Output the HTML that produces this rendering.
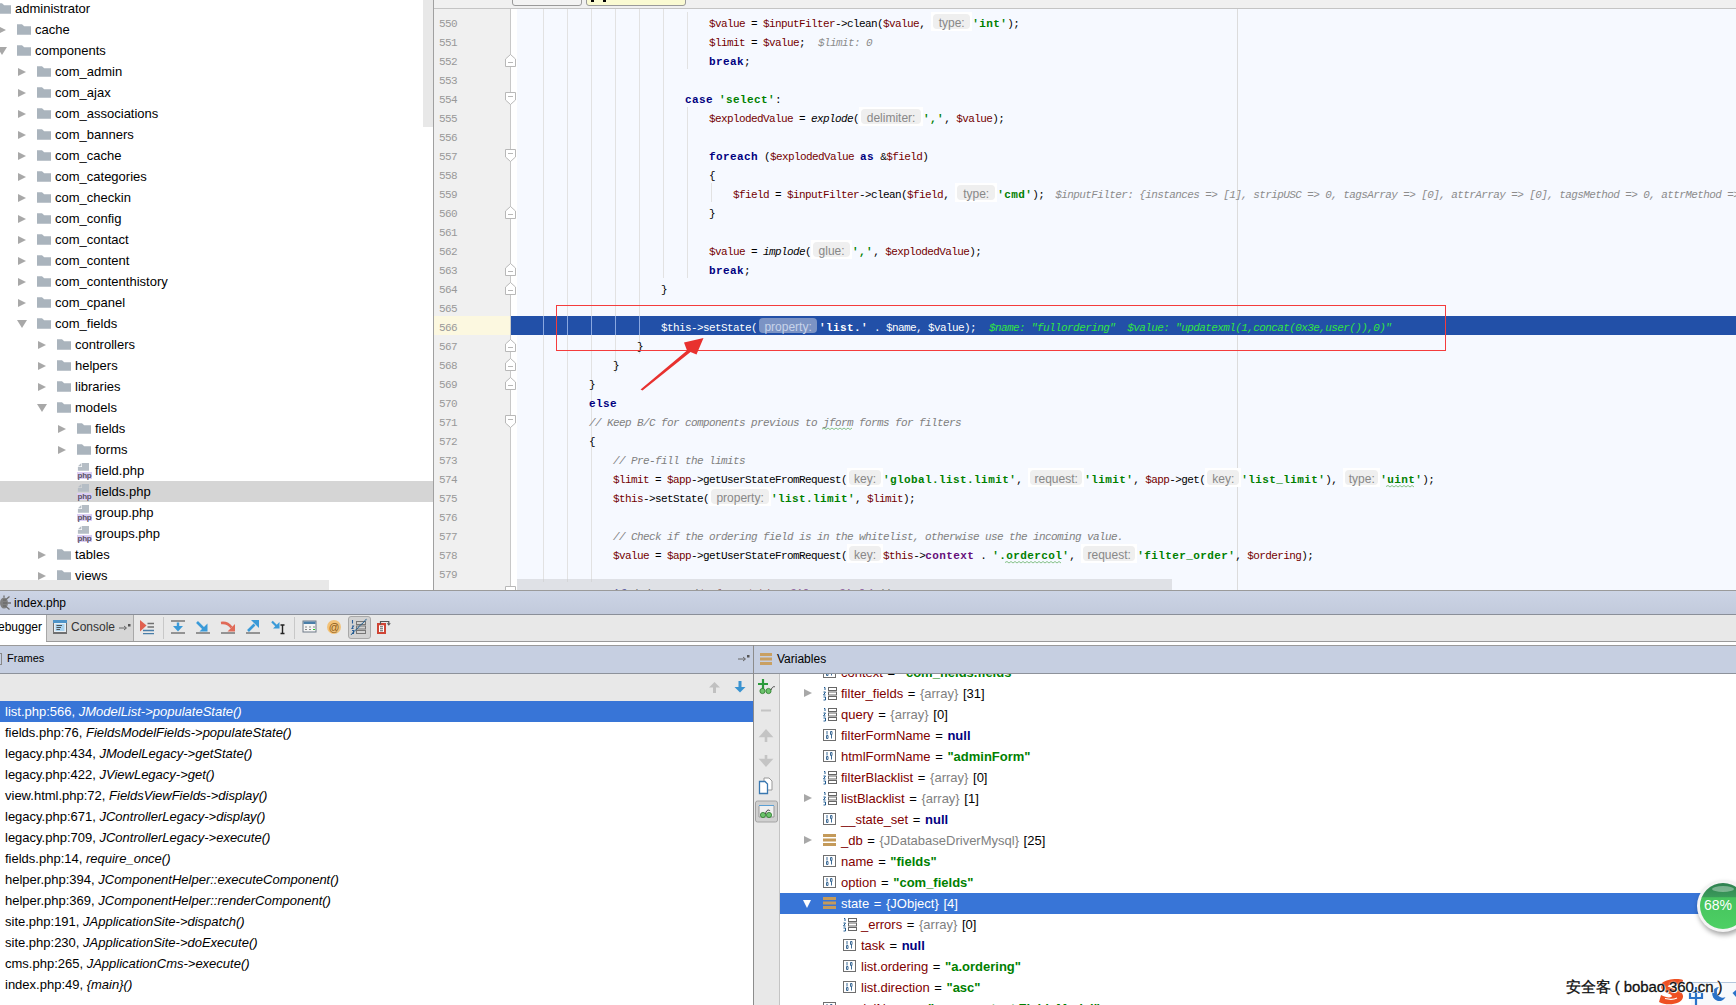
<!DOCTYPE html><html><head><meta charset="utf-8"><style>
*{margin:0;padding:0;box-sizing:border-box}
html,body{width:1736px;height:1005px;overflow:hidden;background:#fff;position:relative;font-family:"Liberation Sans",sans-serif}
.a{position:absolute}
.t{position:absolute;font-size:13px;line-height:21px;white-space:pre;color:#000}
.ln{position:absolute;font-family:"Liberation Mono",monospace;font-size:11px;letter-spacing:-0.6px;color:#999;line-height:19px;white-space:pre}
.cl{position:absolute;left:517px;font-family:"Liberation Mono",monospace;font-size:11px;line-height:19px;white-space:pre;color:#000;height:19px}
.cl span{letter-spacing:-0.6px}
.cl .b{font-weight:bold;letter-spacing:0.4px}
.v{color:#740000}
.cl .k{color:#000080;font-weight:bold;letter-spacing:0.4px}
.cl .s{color:#008000;font-weight:bold;letter-spacing:0.4px}
.c{color:#808080;font-style:italic}
.f{font-style:italic}
.cl .p{color:#660e7a;font-weight:bold;letter-spacing:0.4px}
.dbg{color:#8c8c8c;font-style:italic}
.cl .hb{letter-spacing:0}
.hb{display:inline-block;position:relative;top:-2.6px;height:19px;vertical-align:top;background:#fff}
.hb i{position:absolute;left:2px;right:2px;top:2px;bottom:2px;background:#efefef;border-radius:4px}
.hb b{position:absolute;left:0;right:0;top:1.5px;text-align:center;font-family:"Liberation Sans",sans-serif;font-weight:normal;font-size:12px;line-height:19px;color:#888;letter-spacing:0}
</style></head><body>
<div class="a" style="left:0;top:0;width:433px;height:590px;background:#fff;overflow:hidden">
<svg class="a" style="left:-3px;top:3px" width="14" height="11" viewBox="0 0 14 11"><path d="M0 0.2H5L7.2 2.2H14V10.8H0Z" fill="#aab4bd"/></svg>
<div class="t" style="left:15px;top:-2px">administrator</div>
<div class="a" style="left:-2px;top:26px;width:0;height:0;border-top:4.5px solid transparent;border-bottom:4.5px solid transparent;border-left:8px solid #a8a8a8"></div>
<svg class="a" style="left:17px;top:24px" width="14" height="11" viewBox="0 0 14 11"><path d="M0 0.2H5L7.2 2.2H14V10.8H0Z" fill="#aab4bd"/></svg>
<div class="t" style="left:35px;top:19px">cache</div>
<div class="a" style="left:-3px;top:47px;width:0;height:0;border-left:5px solid transparent;border-right:5px solid transparent;border-top:8px solid #a8a8a8"></div>
<svg class="a" style="left:17px;top:45px" width="14" height="11" viewBox="0 0 14 11"><path d="M0 0.2H5L7.2 2.2H14V10.8H0Z" fill="#aab4bd"/></svg>
<div class="t" style="left:35px;top:40px">components</div>
<div class="a" style="left:18px;top:68px;width:0;height:0;border-top:4.5px solid transparent;border-bottom:4.5px solid transparent;border-left:8px solid #a8a8a8"></div>
<svg class="a" style="left:37px;top:66px" width="14" height="11" viewBox="0 0 14 11"><path d="M0 0.2H5L7.2 2.2H14V10.8H0Z" fill="#aab4bd"/></svg>
<div class="t" style="left:55px;top:61px">com_admin</div>
<div class="a" style="left:18px;top:89px;width:0;height:0;border-top:4.5px solid transparent;border-bottom:4.5px solid transparent;border-left:8px solid #a8a8a8"></div>
<svg class="a" style="left:37px;top:87px" width="14" height="11" viewBox="0 0 14 11"><path d="M0 0.2H5L7.2 2.2H14V10.8H0Z" fill="#aab4bd"/></svg>
<div class="t" style="left:55px;top:82px">com_ajax</div>
<div class="a" style="left:18px;top:110px;width:0;height:0;border-top:4.5px solid transparent;border-bottom:4.5px solid transparent;border-left:8px solid #a8a8a8"></div>
<svg class="a" style="left:37px;top:108px" width="14" height="11" viewBox="0 0 14 11"><path d="M0 0.2H5L7.2 2.2H14V10.8H0Z" fill="#aab4bd"/></svg>
<div class="t" style="left:55px;top:103px">com_associations</div>
<div class="a" style="left:18px;top:131px;width:0;height:0;border-top:4.5px solid transparent;border-bottom:4.5px solid transparent;border-left:8px solid #a8a8a8"></div>
<svg class="a" style="left:37px;top:129px" width="14" height="11" viewBox="0 0 14 11"><path d="M0 0.2H5L7.2 2.2H14V10.8H0Z" fill="#aab4bd"/></svg>
<div class="t" style="left:55px;top:124px">com_banners</div>
<div class="a" style="left:18px;top:152px;width:0;height:0;border-top:4.5px solid transparent;border-bottom:4.5px solid transparent;border-left:8px solid #a8a8a8"></div>
<svg class="a" style="left:37px;top:150px" width="14" height="11" viewBox="0 0 14 11"><path d="M0 0.2H5L7.2 2.2H14V10.8H0Z" fill="#aab4bd"/></svg>
<div class="t" style="left:55px;top:145px">com_cache</div>
<div class="a" style="left:18px;top:173px;width:0;height:0;border-top:4.5px solid transparent;border-bottom:4.5px solid transparent;border-left:8px solid #a8a8a8"></div>
<svg class="a" style="left:37px;top:171px" width="14" height="11" viewBox="0 0 14 11"><path d="M0 0.2H5L7.2 2.2H14V10.8H0Z" fill="#aab4bd"/></svg>
<div class="t" style="left:55px;top:166px">com_categories</div>
<div class="a" style="left:18px;top:194px;width:0;height:0;border-top:4.5px solid transparent;border-bottom:4.5px solid transparent;border-left:8px solid #a8a8a8"></div>
<svg class="a" style="left:37px;top:192px" width="14" height="11" viewBox="0 0 14 11"><path d="M0 0.2H5L7.2 2.2H14V10.8H0Z" fill="#aab4bd"/></svg>
<div class="t" style="left:55px;top:187px">com_checkin</div>
<div class="a" style="left:18px;top:215px;width:0;height:0;border-top:4.5px solid transparent;border-bottom:4.5px solid transparent;border-left:8px solid #a8a8a8"></div>
<svg class="a" style="left:37px;top:213px" width="14" height="11" viewBox="0 0 14 11"><path d="M0 0.2H5L7.2 2.2H14V10.8H0Z" fill="#aab4bd"/></svg>
<div class="t" style="left:55px;top:208px">com_config</div>
<div class="a" style="left:18px;top:236px;width:0;height:0;border-top:4.5px solid transparent;border-bottom:4.5px solid transparent;border-left:8px solid #a8a8a8"></div>
<svg class="a" style="left:37px;top:234px" width="14" height="11" viewBox="0 0 14 11"><path d="M0 0.2H5L7.2 2.2H14V10.8H0Z" fill="#aab4bd"/></svg>
<div class="t" style="left:55px;top:229px">com_contact</div>
<div class="a" style="left:18px;top:257px;width:0;height:0;border-top:4.5px solid transparent;border-bottom:4.5px solid transparent;border-left:8px solid #a8a8a8"></div>
<svg class="a" style="left:37px;top:255px" width="14" height="11" viewBox="0 0 14 11"><path d="M0 0.2H5L7.2 2.2H14V10.8H0Z" fill="#aab4bd"/></svg>
<div class="t" style="left:55px;top:250px">com_content</div>
<div class="a" style="left:18px;top:278px;width:0;height:0;border-top:4.5px solid transparent;border-bottom:4.5px solid transparent;border-left:8px solid #a8a8a8"></div>
<svg class="a" style="left:37px;top:276px" width="14" height="11" viewBox="0 0 14 11"><path d="M0 0.2H5L7.2 2.2H14V10.8H0Z" fill="#aab4bd"/></svg>
<div class="t" style="left:55px;top:271px">com_contenthistory</div>
<div class="a" style="left:18px;top:299px;width:0;height:0;border-top:4.5px solid transparent;border-bottom:4.5px solid transparent;border-left:8px solid #a8a8a8"></div>
<svg class="a" style="left:37px;top:297px" width="14" height="11" viewBox="0 0 14 11"><path d="M0 0.2H5L7.2 2.2H14V10.8H0Z" fill="#aab4bd"/></svg>
<div class="t" style="left:55px;top:292px">com_cpanel</div>
<div class="a" style="left:17px;top:320px;width:0;height:0;border-left:5px solid transparent;border-right:5px solid transparent;border-top:8px solid #a8a8a8"></div>
<svg class="a" style="left:37px;top:318px" width="14" height="11" viewBox="0 0 14 11"><path d="M0 0.2H5L7.2 2.2H14V10.8H0Z" fill="#aab4bd"/></svg>
<div class="t" style="left:55px;top:313px">com_fields</div>
<div class="a" style="left:38px;top:341px;width:0;height:0;border-top:4.5px solid transparent;border-bottom:4.5px solid transparent;border-left:8px solid #a8a8a8"></div>
<svg class="a" style="left:57px;top:339px" width="14" height="11" viewBox="0 0 14 11"><path d="M0 0.2H5L7.2 2.2H14V10.8H0Z" fill="#aab4bd"/></svg>
<div class="t" style="left:75px;top:334px">controllers</div>
<div class="a" style="left:38px;top:362px;width:0;height:0;border-top:4.5px solid transparent;border-bottom:4.5px solid transparent;border-left:8px solid #a8a8a8"></div>
<svg class="a" style="left:57px;top:360px" width="14" height="11" viewBox="0 0 14 11"><path d="M0 0.2H5L7.2 2.2H14V10.8H0Z" fill="#aab4bd"/></svg>
<div class="t" style="left:75px;top:355px">helpers</div>
<div class="a" style="left:38px;top:383px;width:0;height:0;border-top:4.5px solid transparent;border-bottom:4.5px solid transparent;border-left:8px solid #a8a8a8"></div>
<svg class="a" style="left:57px;top:381px" width="14" height="11" viewBox="0 0 14 11"><path d="M0 0.2H5L7.2 2.2H14V10.8H0Z" fill="#aab4bd"/></svg>
<div class="t" style="left:75px;top:376px">libraries</div>
<div class="a" style="left:37px;top:404px;width:0;height:0;border-left:5px solid transparent;border-right:5px solid transparent;border-top:8px solid #a8a8a8"></div>
<svg class="a" style="left:57px;top:402px" width="14" height="11" viewBox="0 0 14 11"><path d="M0 0.2H5L7.2 2.2H14V10.8H0Z" fill="#aab4bd"/></svg>
<div class="t" style="left:75px;top:397px">models</div>
<div class="a" style="left:58px;top:425px;width:0;height:0;border-top:4.5px solid transparent;border-bottom:4.5px solid transparent;border-left:8px solid #a8a8a8"></div>
<svg class="a" style="left:77px;top:423px" width="14" height="11" viewBox="0 0 14 11"><path d="M0 0.2H5L7.2 2.2H14V10.8H0Z" fill="#aab4bd"/></svg>
<div class="t" style="left:95px;top:418px">fields</div>
<div class="a" style="left:58px;top:446px;width:0;height:0;border-top:4.5px solid transparent;border-bottom:4.5px solid transparent;border-left:8px solid #a8a8a8"></div>
<svg class="a" style="left:77px;top:444px" width="14" height="11" viewBox="0 0 14 11"><path d="M0 0.2H5L7.2 2.2H14V10.8H0Z" fill="#aab4bd"/></svg>
<div class="t" style="left:95px;top:439px">forms</div>
<svg class="a" style="left:77px;top:463px" width="16" height="17" viewBox="0 0 16 17"><path d="M5 0H12V7.7H0.9V4H5Z" fill="#b5bdc5"/><path d="M0.9 3.3L4.4 0V3.3Z" fill="#b5bdc5"/><rect x="0" y="9" width="15" height="7" fill="#dccff5"/><text x="7.5" y="15.3" font-size="8" font-weight="bold" text-anchor="middle" fill="#5a5266" font-family="Liberation Sans" letter-spacing="-0.2">php</text></svg>
<div class="t" style="left:95px;top:460px">field.php</div>
<div class="a" style="left:0;top:481px;width:433px;height:21px;background:#d5d5d5"></div>
<svg class="a" style="left:77px;top:484px" width="16" height="17" viewBox="0 0 16 17"><path d="M5 0H12V7.7H0.9V4H5Z" fill="#b5bdc5"/><path d="M0.9 3.3L4.4 0V3.3Z" fill="#b5bdc5"/><rect x="0" y="9" width="15" height="7" fill="#dccff5"/><text x="7.5" y="15.3" font-size="8" font-weight="bold" text-anchor="middle" fill="#5a5266" font-family="Liberation Sans" letter-spacing="-0.2">php</text></svg>
<div class="t" style="left:95px;top:481px">fields.php</div>
<svg class="a" style="left:77px;top:505px" width="16" height="17" viewBox="0 0 16 17"><path d="M5 0H12V7.7H0.9V4H5Z" fill="#b5bdc5"/><path d="M0.9 3.3L4.4 0V3.3Z" fill="#b5bdc5"/><rect x="0" y="9" width="15" height="7" fill="#dccff5"/><text x="7.5" y="15.3" font-size="8" font-weight="bold" text-anchor="middle" fill="#5a5266" font-family="Liberation Sans" letter-spacing="-0.2">php</text></svg>
<div class="t" style="left:95px;top:502px">group.php</div>
<svg class="a" style="left:77px;top:526px" width="16" height="17" viewBox="0 0 16 17"><path d="M5 0H12V7.7H0.9V4H5Z" fill="#b5bdc5"/><path d="M0.9 3.3L4.4 0V3.3Z" fill="#b5bdc5"/><rect x="0" y="9" width="15" height="7" fill="#dccff5"/><text x="7.5" y="15.3" font-size="8" font-weight="bold" text-anchor="middle" fill="#5a5266" font-family="Liberation Sans" letter-spacing="-0.2">php</text></svg>
<div class="t" style="left:95px;top:523px">groups.php</div>
<div class="a" style="left:38px;top:551px;width:0;height:0;border-top:4.5px solid transparent;border-bottom:4.5px solid transparent;border-left:8px solid #a8a8a8"></div>
<svg class="a" style="left:57px;top:549px" width="14" height="11" viewBox="0 0 14 11"><path d="M0 0.2H5L7.2 2.2H14V10.8H0Z" fill="#aab4bd"/></svg>
<div class="t" style="left:75px;top:544px">tables</div>
<div class="a" style="left:38px;top:572px;width:0;height:0;border-top:4.5px solid transparent;border-bottom:4.5px solid transparent;border-left:8px solid #a8a8a8"></div>
<svg class="a" style="left:57px;top:570px" width="14" height="11" viewBox="0 0 14 11"><path d="M0 0.2H5L7.2 2.2H14V10.8H0Z" fill="#aab4bd"/></svg>
<div class="t" style="left:75px;top:565px">views</div>
<svg class="a" style="left:57px;top:591px" width="14" height="11" viewBox="0 0 14 11"><path d="M0 0.2H5L7.2 2.2H14V10.8H0Z" fill="#aab4bd"/></svg>
<div class="a" style="left:0;top:580px;width:329px;height:10px;background:#e8e8e8"></div>
</div>
<div class="a" style="left:423px;top:0;width:10px;height:127px;background:#e8e8e8"></div>
<div class="a" style="left:433px;top:0;width:1px;height:590px;background:#a0a0a0"></div>
<div class="a" style="left:434px;top:0;width:1302px;height:590px;background:#f6f9ff;overflow:hidden">
</div>
<div class="a" style="left:434px;top:0;width:1302px;height:8px;background:#f0f0f0"></div>
<div class="a" style="left:434px;top:8px;width:1302px;height:1px;background:#c4c4c4"></div>
<div class="a" style="left:512px;top:-4px;width:70px;height:10px;background:#f3f3f3;border:1px solid #9a9a9a;border-radius:0 0 3px 3px"></div>
<div class="a" style="left:586px;top:-4px;width:100px;height:10px;background:#fafad2;border:1px solid #9a9a9a;border-radius:0 0 3px 3px"></div>
<div class="a" style="left:591px;top:0;width:3px;height:2px;background:#000"></div>
<div class="a" style="left:603px;top:0;width:3px;height:2px;background:#000"></div>
<div class="a" style="left:434px;top:9px;width:76px;height:581px;background:#f0f0f0"></div>
<div class="a" style="left:510px;top:9px;width:7px;height:581px;background:#fff"></div>
<div class="a" style="left:510px;top:9px;width:1px;height:581px;background:#c8c8c8"></div>
<div class="a" style="left:1237px;top:9px;width:1px;height:581px;background:#dcdcdc"></div>
<div class="a" style="left:543px;top:9px;width:1px;height:573px;background:#e2e2e2"></div>
<div class="a" style="left:567px;top:9px;width:1px;height:573px;background:#e2e2e2"></div>
<div class="a" style="left:591px;top:9px;width:1px;height:573px;background:#e2e2e2"></div>
<div class="a" style="left:615px;top:9px;width:1px;height:364px;background:#e2e2e2"></div>
<div class="a" style="left:639px;top:9px;width:1px;height:345px;background:#e2e2e2"></div>
<div class="a" style="left:663px;top:9px;width:1px;height:269px;background:#e2e2e2"></div>
<div class="a" style="left:687px;top:12px;width:1px;height:57px;background:#e2e2e2"></div>
<div class="a" style="left:687px;top:107px;width:1px;height:171px;background:#e2e2e2"></div>
<div class="a" style="left:711px;top:183px;width:1px;height:19px;background:#e2e2e2"></div>
<div class="a" style="left:511px;top:316px;width:1225px;height:19px;background:#2250a8"></div>
<div class="a" style="left:434px;top:316px;width:76px;height:19px;background:#fcf8e0"></div>
<div class="a" style="left:543px;top:316px;width:1px;height:19px;background:#8aa8e0"></div>
<div class="a" style="left:567px;top:316px;width:1px;height:19px;background:#8aa8e0"></div>
<div class="a" style="left:591px;top:316px;width:1px;height:19px;background:#8aa8e0"></div>
<div class="a" style="left:615px;top:316px;width:1px;height:19px;background:#8aa8e0"></div>
<div class="a" style="left:639px;top:316px;width:1px;height:19px;background:#8aa8e0"></div>
<div class="ln" style="left:439px;top:14.6px">550</div>
<div class="ln" style="left:439px;top:33.6px">551</div>
<div class="ln" style="left:439px;top:52.6px">552</div>
<div class="ln" style="left:439px;top:71.6px">553</div>
<div class="ln" style="left:439px;top:90.6px">554</div>
<div class="ln" style="left:439px;top:109.6px">555</div>
<div class="ln" style="left:439px;top:128.6px">556</div>
<div class="ln" style="left:439px;top:147.6px">557</div>
<div class="ln" style="left:439px;top:166.6px">558</div>
<div class="ln" style="left:439px;top:185.6px">559</div>
<div class="ln" style="left:439px;top:204.6px">560</div>
<div class="ln" style="left:439px;top:223.6px">561</div>
<div class="ln" style="left:439px;top:242.6px">562</div>
<div class="ln" style="left:439px;top:261.6px">563</div>
<div class="ln" style="left:439px;top:280.6px">564</div>
<div class="ln" style="left:439px;top:299.6px">565</div>
<div class="ln" style="left:439px;top:318.6px">566</div>
<div class="ln" style="left:439px;top:337.6px">567</div>
<div class="ln" style="left:439px;top:356.6px">568</div>
<div class="ln" style="left:439px;top:375.6px">569</div>
<div class="ln" style="left:439px;top:394.6px">570</div>
<div class="ln" style="left:439px;top:413.6px">571</div>
<div class="ln" style="left:439px;top:432.6px">572</div>
<div class="ln" style="left:439px;top:451.6px">573</div>
<div class="ln" style="left:439px;top:470.6px">574</div>
<div class="ln" style="left:439px;top:489.6px">575</div>
<div class="ln" style="left:439px;top:508.6px">576</div>
<div class="ln" style="left:439px;top:527.6px">577</div>
<div class="ln" style="left:439px;top:546.6px">578</div>
<div class="ln" style="left:439px;top:565.6px">579</div>
<div class="ln" style="left:439px;top:584.6px">580</div>
<div class="a" style="left:505px;top:53px;width:11px;height:13px"><svg width="11" height="13" viewBox="0 0 11 13"><path d="M0.5 12.5V5L5.5 0.5L10.5 5V12.5Z" fill="#fff" stroke="#b8b8b8"/><path d="M3 8.5H8" stroke="#b8b8b8"/></svg></div>
<div class="a" style="left:505px;top:205px;width:11px;height:13px"><svg width="11" height="13" viewBox="0 0 11 13"><path d="M0.5 12.5V5L5.5 0.5L10.5 5V12.5Z" fill="#fff" stroke="#b8b8b8"/><path d="M3 8.5H8" stroke="#b8b8b8"/></svg></div>
<div class="a" style="left:505px;top:262px;width:11px;height:13px"><svg width="11" height="13" viewBox="0 0 11 13"><path d="M0.5 12.5V5L5.5 0.5L10.5 5V12.5Z" fill="#fff" stroke="#b8b8b8"/><path d="M3 8.5H8" stroke="#b8b8b8"/></svg></div>
<div class="a" style="left:505px;top:281px;width:11px;height:13px"><svg width="11" height="13" viewBox="0 0 11 13"><path d="M0.5 12.5V5L5.5 0.5L10.5 5V12.5Z" fill="#fff" stroke="#b8b8b8"/><path d="M3 8.5H8" stroke="#b8b8b8"/></svg></div>
<div class="a" style="left:505px;top:338px;width:11px;height:13px"><svg width="11" height="13" viewBox="0 0 11 13"><path d="M0.5 12.5V5L5.5 0.5L10.5 5V12.5Z" fill="#fff" stroke="#b8b8b8"/><path d="M3 8.5H8" stroke="#b8b8b8"/></svg></div>
<div class="a" style="left:505px;top:357px;width:11px;height:13px"><svg width="11" height="13" viewBox="0 0 11 13"><path d="M0.5 12.5V5L5.5 0.5L10.5 5V12.5Z" fill="#fff" stroke="#b8b8b8"/><path d="M3 8.5H8" stroke="#b8b8b8"/></svg></div>
<div class="a" style="left:505px;top:376px;width:11px;height:13px"><svg width="11" height="13" viewBox="0 0 11 13"><path d="M0.5 12.5V5L5.5 0.5L10.5 5V12.5Z" fill="#fff" stroke="#b8b8b8"/><path d="M3 8.5H8" stroke="#b8b8b8"/></svg></div>
<div class="a" style="left:505px;top:91px;width:11px;height:13px"><svg width="11" height="13" viewBox="0 0 11 13"><path d="M0.5 0.5V8L5.5 12.5L10.5 8V0.5Z" fill="#fff" stroke="#b8b8b8"/><path d="M3 4.5H8" stroke="#b8b8b8"/></svg></div>
<div class="a" style="left:505px;top:148px;width:11px;height:13px"><svg width="11" height="13" viewBox="0 0 11 13"><path d="M0.5 0.5V8L5.5 12.5L10.5 8V0.5Z" fill="#fff" stroke="#b8b8b8"/><path d="M3 4.5H8" stroke="#b8b8b8"/></svg></div>
<div class="a" style="left:505px;top:414px;width:11px;height:13px"><svg width="11" height="13" viewBox="0 0 11 13"><path d="M0.5 0.5V8L5.5 12.5L10.5 8V0.5Z" fill="#fff" stroke="#b8b8b8"/><path d="M3 4.5H8" stroke="#b8b8b8"/></svg></div>
<div class="a" style="left:505px;top:585px;width:11px;height:13px"><svg width="11" height="13" viewBox="0 0 11 13"><path d="M0.5 0.5V8L5.5 12.5L10.5 8V0.5Z" fill="#fff" stroke="#b8b8b8"/><path d="M3 4.5H8" stroke="#b8b8b8"/></svg></div>
<div class="cl" style="top:12px;padding-top:2.6px"><span>                                </span><span class="v">$value</span><span> = </span><span class="v">$inputFilter</span><span>-&gt;clean(</span><span class="v">$value</span><span>, </span><span class="hb" style="width:41px"><i></i><b>type:</b></span><span class="s">&#x27;int&#x27;</span><span>);</span></div>
<div class="cl" style="top:31px;padding-top:2.6px"><span>                                </span><span class="v">$limit</span><span> = </span><span class="v">$value</span><span>;</span><span class="dbg" style="margin-left:13px">$limit: 0</span></div>
<div class="cl" style="top:50px;padding-top:2.6px"><span>                                </span><span class="k">break</span><span>;</span></div>
<div class="cl" style="top:88px;padding-top:2.6px"><span>                            </span><span class="k">case</span><span> </span><span class="s">&#x27;select&#x27;</span><span>:</span></div>
<div class="cl" style="top:107px;padding-top:2.6px"><span>                                </span><span class="v">$explodedValue</span><span> = </span><span class="f">explode</span><span>(</span><span class="hb" style="width:64px"><i></i><b>delimiter:</b></span><span class="s">&#x27;,&#x27;</span><span>, </span><span class="v">$value</span><span>);</span></div>
<div class="cl" style="top:145px;padding-top:2.6px"><span>                                </span><span class="k">foreach</span><span> (</span><span class="v">$explodedValue</span><span> </span><span class="k">as</span><span> &amp;</span><span class="v">$field</span><span>)</span></div>
<div class="cl" style="top:164px;padding-top:2.6px"><span>                                </span><span>{</span></div>
<div class="cl" style="top:183px;padding-top:2.6px"><span>                                    </span><span class="v">$field</span><span> = </span><span class="v">$inputFilter</span><span>-&gt;clean(</span><span class="v">$field</span><span>, </span><span class="hb" style="width:42px"><i></i><b>type:</b></span><span class="s">&#x27;cmd&#x27;</span><span>);</span><span class="dbg" style="margin-left:11px">$inputFilter: {instances =&gt; [1], stripUSC =&gt; 0, tagsArray =&gt; [0], attrArray =&gt; [0], tagsMethod =&gt; 0, attrMethod =&gt; 0, xssAuto =&gt; 1}</span></div>
<div class="cl" style="top:202px;padding-top:2.6px"><span>                                </span><span>}</span></div>
<div class="cl" style="top:240px;padding-top:2.6px"><span>                                </span><span class="v">$value</span><span> = </span><span class="f">implode</span><span>(</span><span class="hb" style="width:41px"><i></i><b>glue:</b></span><span class="s">&#x27;,&#x27;</span><span>, </span><span class="v">$explodedValue</span><span>);</span></div>
<div class="cl" style="top:259px;padding-top:2.6px"><span>                                </span><span class="k">break</span><span>;</span></div>
<div class="cl" style="top:278px;padding-top:2.6px"><span>                        </span><span>}</span></div>
<div class="cl" style="top:316px;padding-top:2.6px"><span style="color:#fff"><span>                        </span><span>$this-&gt;setState(</span><span class="hb" style="width:62px;background:transparent"><i style="background:#7b93c4"></i><b style="color:#c8d4ea">property:</b></span><span class="b">'list.'</span><span> . $name, $value);</span></span><span class="dbg" style="margin-left:13px;color:#30e444">$name: "fullordering"  $value: "updatexml(1,concat(0x3e,user()),0)"</span></div>
<div class="cl" style="top:335px;padding-top:2.6px"><span>                    </span><span>}</span></div>
<div class="cl" style="top:354px;padding-top:2.6px"><span>                </span><span>}</span></div>
<div class="cl" style="top:373px;padding-top:2.6px"><span>            </span><span>}</span></div>
<div class="cl" style="top:392px;padding-top:2.6px"><span>            </span><span class="k">else</span></div>
<div class="cl" style="top:411px;padding-top:2.6px"><span>            </span><span class="c">// Keep B/C for components previous to jform forms for filters</span></div>
<div class="cl" style="top:430px;padding-top:2.6px"><span>            </span><span>{</span></div>
<div class="cl" style="top:449px;padding-top:2.6px"><span>                </span><span class="c">// Pre-fill the limits</span></div>
<div class="cl" style="top:468px;padding-top:2.6px"><span>                </span><span class="v">$limit</span><span> = </span><span class="v">$app</span><span>-&gt;getUserStateFromRequest(</span><span class="hb" style="width:36px"><i></i><b>key:</b></span><span class="s">&#x27;global.list.limit&#x27;</span><span>, </span><span class="hb" style="width:56px"><i></i><b>request:</b></span><span class="s">&#x27;limit&#x27;</span><span>, </span><span class="v">$app</span><span>-&gt;get(</span><span class="hb" style="width:36px"><i></i><b>key:</b></span><span class="s">&#x27;list_limit&#x27;</span><span>), </span><span class="hb" style="width:37px"><i></i><b>type:</b></span><span class="s">&#x27;uint&#x27;</span><span>);</span></div>
<div class="cl" style="top:487px;padding-top:2.6px"><span>                </span><span class="v">$this</span><span>-&gt;setState(</span><span class="hb" style="width:62px"><i></i><b>property:</b></span><span class="s">&#x27;list.limit&#x27;</span><span>, </span><span class="v">$limit</span><span>);</span></div>
<div class="cl" style="top:525px;padding-top:2.6px"><span>                </span><span class="c">// Check if the ordering field is in the whitelist, otherwise use the incoming value.</span></div>
<div class="cl" style="top:544px;padding-top:2.6px"><span>                </span><span class="v">$value</span><span> = </span><span class="v">$app</span><span>-&gt;getUserStateFromRequest(</span><span class="hb" style="width:36px"><i></i><b>key:</b></span><span class="v">$this</span><span>-&gt;</span><span class="p">context</span><span> . </span><span class="s">&#x27;.ordercol&#x27;</span><span>, </span><span class="hb" style="width:56px"><i></i><b>request:</b></span><span class="s">&#x27;filter_order&#x27;</span><span>, </span><span class="v">$ordering</span><span>);</span></div>
<div class="cl" style="top:582px;padding-top:2.6px"><span>                </span><span class="k">if</span><span> (!</span><span class="f">in_array</span><span>(</span><span class="v">$value</span><span>, </span><span class="v">$this</span><span>-&gt;</span><span class="p">filter_fields</span><span>))</span></div>
<svg class="a" style="left:0;top:0" width="1736" height="590" viewBox="0 0 1736 590"><path d="M822 429L824 428L826 429.5L828 428L830 429.5L832 428L834 429.5L836 428L838 429.5L840 428L842 429.5L844 428L846 429.5L848 428L850 429.5L852 428" stroke="#6ab46a" stroke-width="0.8" fill="none"/></svg>
<svg class="a" style="left:0;top:0" width="1736" height="590" viewBox="0 0 1736 590"><path d="M1005 562.5L1007 561.5L1009 563.0L1011 561.5L1013 563.0L1015 561.5L1017 563.0L1019 561.5L1021 563.0L1023 561.5L1025 563.0L1027 561.5L1029 563.0L1031 561.5L1033 563.0L1035 561.5L1037 563.0L1039 561.5L1041 563.0L1043 561.5L1045 563.0L1047 561.5L1049 563.0L1051 561.5L1053 563.0L1055 561.5L1057 563.0L1059 561.5L1061 563.0" stroke="#6ab46a" stroke-width="0.8" fill="none"/></svg>
<svg class="a" style="left:0;top:0" width="1736" height="590" viewBox="0 0 1736 590"><path d="M1386 486.5L1388 485.5L1390 487.0L1392 485.5L1394 487.0L1396 485.5L1398 487.0L1400 485.5L1402 487.0L1404 485.5L1406 487.0L1408 485.5L1410 487.0L1412 485.5L1414 487.0" stroke="#6ab46a" stroke-width="0.8" fill="none"/></svg>
<div class="a" style="left:517px;top:579px;width:655px;height:11px;background:rgba(200,202,206,0.5)"></div>
<div class="a" style="left:556px;top:305px;width:890px;height:46px;border:1.5px solid #f43c3c"></div>
<svg class="a" style="left:0;top:0" width="1736" height="600" viewBox="0 0 1736 600"><path d="M640.5 389.5L687 350.5L684 342.5L703.5 338L696.5 354.5L690.5 352L642.5 390.5Z" fill="#e8312f"/></svg>
<div class="a" style="left:0;top:590px;width:1736px;height:415px;background:#fff;overflow:hidden">
<div class="a" style="left:0;top:0;width:1736px;height:1px;background:#9a9a9a"></div>
<div class="a" style="left:0;top:1px;width:1736px;height:23px;background:linear-gradient(#ccd4e5,#c2cadc)"></div>
<div class="a" style="left:0;top:24px;width:1736px;height:1px;background:#8a8f99"></div>
<svg class="a" style="left:0;top:5px" width="12" height="16" viewBox="0 0 12 16"><ellipse cx="4" cy="8" rx="4" ry="5.5" fill="#808080"/><path d="M6 4.5L9.5 1.5M7.5 8H11M6 11.5L9.5 14.5M4 2.5V0.5" stroke="#707070" stroke-width="1.3"/><path d="M3 5H6M3 8H7M3 11H6" stroke="#5a5a5a" stroke-width="0.8"/></svg>
<div class="t" style="left:14px;top:3px;font-size:12px;line-height:21px">index.php</div>
<div class="a" style="left:0;top:25px;width:1736px;height:26px;background:#e8e8e8"></div>
<div class="a" style="left:0;top:51px;width:1736px;height:1px;background:#9a9a9a"></div>
<div class="a" style="left:0;top:25px;width:46px;height:30px;background:#fff"></div>
<div class="t" style="left:-2px;top:27px;font-size:12px;line-height:21px">ebugger</div>
<div class="a" style="left:46px;top:25px;width:88px;height:26px;background:#d6d6d6;border-left:1px solid #a8a8a8;border-right:1px solid #a8a8a8"></div>
<svg class="a" style="left:53px;top:30px" width="15" height="15" viewBox="0 0 15 15"><rect x="0" y="0" width="14" height="14" fill="#707070"/><rect x="0" y="0" width="14" height="3" fill="#4f94c8"/><rect x="1" y="3" width="12" height="9" fill="#e8eef2"/><rect x="2.5" y="4" width="9" height="7" fill="#a9d4f0"/><path d="M3.5 5.5H9M3.5 7.5H8M3.5 9.5H7" stroke="#444" stroke-width="0.9"/></svg>
<div class="t" style="left:71px;top:27px;font-size:12px;line-height:21px;color:#333">Console</div>
<svg class="a" style="left:119px;top:33px" width="12" height="9" viewBox="0 0 12 9"><path d="M0 5H7M5 3L7.5 5L5 7" stroke="#666" fill="none"/><rect x="9" y="1" width="2.5" height="2.5" fill="#555"/></svg>
<svg class="a" style="left:0;top:24px" width="420" height="28" viewBox="0 614 420 28"><path d="M140 620L146.5 625.5L140 631.5Z" fill="#e0604f"/><path d="M147.5 623.5H154M147.5 627H154" stroke="#707070" stroke-width="1.4"/><path d="M143 630.5H154M143 633.6H154" stroke="#4a7ea8" stroke-width="1.4"/><path d="M163.5 617V639" stroke="#c8c8c8"/><path d="M171 621H185M171 633H185" stroke="#777" stroke-width="1.5"/><path d="M178 622.5V627" stroke="#3a9ad8" stroke-width="2.4"/><path d="M173 626H183L178 631.5Z" fill="#3a9ad8"/><path d="M196 633H210M221 633H235M246 633H260" stroke="#777" stroke-width="1.5"/><path d="M197 622L203.5 628.5" stroke="#3a9ad8" stroke-width="2.6"/><path d="M207.5 623.5V631.5H199.5Z" fill="#3a9ad8"/><path d="M221 623Q227.5 622 231.5 627.5" stroke="#e06a58" stroke-width="2.6" fill="none"/><path d="M235 624V631.5H227.5Z" fill="#e06a58"/><path d="M248 631L254.5 624.5" stroke="#3a9ad8" stroke-width="2.6"/><path d="M259 620V628L251 620Z" fill="#3a9ad8"/><path d="M272 621.5L276.5 626" stroke="#3a9ad8" stroke-width="2.2"/><path d="M279.5 622V628.5H273Z" fill="#3a9ad8"/><path d="M282.5 625V633.5M280.5 625H284.5M280.5 633.5H284.5" stroke="#222" stroke-width="1.4"/><path d="M294.5 617V639" stroke="#c8c8c8"/><rect x="303" y="621" width="13" height="11" fill="#f4f4f4" stroke="#6f7a88"/><rect x="303.5" y="621.5" width="12" height="2.5" fill="#4a7ea8"/><path d="M305 627H307M309 627H311M313 627H315M305 629.5H307M309 629.5H311" stroke="#888"/><path d="M313 629.5H315" stroke="#2c2"/><circle cx="334" cy="627" r="7" fill="#f2c27a"/><text x="334" y="631" font-size="10.5" text-anchor="middle" fill="#8a5a18" font-family="Liberation Sans">@</text><rect x="348.5" y="616.5" width="22" height="22" rx="2.5" fill="#d2d2d2" stroke="#a8a8a8"/><path d="M352.5 620V623.5M352 626H353.5L352 628.5H353.5M352 630.5H353.5V633.5H352" stroke="#2b5f9a" stroke-width="1.1" fill="none"/><rect x="356.5" y="621.5" width="9" height="3" fill="none" stroke="#777"/><rect x="356.5" y="626" width="9" height="3" fill="none" stroke="#777"/><rect x="356.5" y="630.5" width="9" height="3" fill="none" stroke="#777"/><path d="M351 634.7L366.8 619" stroke="#1c5a8c" stroke-width="1.1" stroke-dasharray="1.2 0.5"/><rect x="377" y="623" width="9" height="11" fill="#cf4535"/><rect x="379" y="625.3" width="5" height="6.7" fill="#fff"/><path d="M380 626.8H383M380 628.8H383M380 630.8H383" stroke="#444" stroke-width="0.9"/><path d="M380.5 624.5V621.5H388.8V623.5" stroke="#555" fill="none" stroke-width="1.2"/><path d="M386.8 623.2H390.8L388.8 625.8Z" fill="#555"/></svg>
<div class="a" style="left:0;top:52px;width:1736px;height:3px;background:#fff"></div>
<div class="a" style="left:0;top:55px;width:1736px;height:1px;background:#9a9a9a"></div>
<div class="a" style="left:0;top:56px;width:1736px;height:27px;background:#c6cfe1"></div>
<div class="a" style="left:0;top:83px;width:1736px;height:1px;background:#8d929b"></div>
<div class="a" style="left:-7px;top:63px;width:9px;height:12px;border:1px solid #888"></div>
<div class="t" style="left:7px;top:58px;font-size:11px;line-height:21px">Frames</div>
<svg class="a" style="left:738px;top:64px" width="12" height="9" viewBox="0 0 12 9"><path d="M0 5H7M5 3L7.5 5L5 7" stroke="#666" fill="none"/><rect x="9" y="1" width="2.5" height="2.5" fill="#555"/></svg>
<div class="a" style="left:753px;top:55px;width:1px;height:360px;background:#8c8c8c"></div>
<div class="a" style="left:0;top:84px;width:753px;height:27px;background:#e8e8e8"></div>
<svg class="a" style="left:708px;top:91px" width="40" height="13" viewBox="0 0 40 13"><path d="M6.5 12V5" stroke="#c0c0c0" stroke-width="3"/><path d="M1 6.5L6.5 1L12 6.5Z" fill="#c0c0c0"/><path d="M32 0V7" stroke="#3a93d0" stroke-width="3"/><path d="M26.5 6L32 11.5L37.5 6Z" fill="#3a93d0"/></svg>
<div class="a" style="left:0;top:111px;width:753px;height:21px;background:#3875d7"></div>
<div class="t" style="left:5px;top:111px;color:#fff">list.php:566, <i>JModelList-&gt;populateState()</i></div>
<div class="t" style="left:5px;top:132px;color:#000">fields.php:76, <i>FieldsModelFields-&gt;populateState()</i></div>
<div class="t" style="left:5px;top:153px;color:#000">legacy.php:434, <i>JModelLegacy-&gt;getState()</i></div>
<div class="t" style="left:5px;top:174px;color:#000">legacy.php:422, <i>JViewLegacy-&gt;get()</i></div>
<div class="t" style="left:5px;top:195px;color:#000">view.html.php:72, <i>FieldsViewFields-&gt;display()</i></div>
<div class="t" style="left:5px;top:216px;color:#000">legacy.php:671, <i>JControllerLegacy-&gt;display()</i></div>
<div class="t" style="left:5px;top:237px;color:#000">legacy.php:709, <i>JControllerLegacy-&gt;execute()</i></div>
<div class="t" style="left:5px;top:258px;color:#000">fields.php:14, <i>require_once()</i></div>
<div class="t" style="left:5px;top:279px;color:#000">helper.php:394, <i>JComponentHelper::executeComponent()</i></div>
<div class="t" style="left:5px;top:300px;color:#000">helper.php:369, <i>JComponentHelper::renderComponent()</i></div>
<div class="t" style="left:5px;top:321px;color:#000">site.php:191, <i>JApplicationSite-&gt;dispatch()</i></div>
<div class="t" style="left:5px;top:342px;color:#000">site.php:230, <i>JApplicationSite-&gt;doExecute()</i></div>
<div class="t" style="left:5px;top:363px;color:#000">cms.php:265, <i>JApplicationCms-&gt;execute()</i></div>
<div class="t" style="left:5px;top:384px;color:#000">index.php:49, <i>{main}()</i></div>
<svg class="a" style="left:760px;top:63px" width="13" height="13" viewBox="0 0 13 13"><rect x="0" y="0" width="12" height="3" fill="#c9a062"/><rect x="0" y="4.5" width="12" height="3" fill="#c9a062"/><rect x="0" y="9" width="12" height="3" fill="#c9a062"/></svg>
<div class="t" style="left:777px;top:59px;font-size:12px;line-height:21px">Variables</div>
<div class="a" style="left:754px;top:84px;width:25px;height:331px;background:#e8e8e8"></div>
<div class="a" style="left:779px;top:84px;width:1px;height:331px;background:#c4c4c4"></div>
<svg class="a" style="left:754px;top:84px" width="26" height="160" viewBox="0 0 26 160"><path d="M9 5V15M4 10H14" stroke="#2a9a3a" stroke-width="2.2"/><circle cx="8.5" cy="17" r="2.6" fill="#6cc36c" stroke="#2a7a2a" stroke-width="0.8"/><circle cx="14.5" cy="17" r="2.6" fill="#6cc36c" stroke="#2a7a2a" stroke-width="0.8"/><path d="M17 16C18 13 20 12 21 13" stroke="#444" fill="none"/><path d="M7 36.5H17" stroke="#c4c4c4" stroke-width="2"/><path d="M12 68V61M7.5 62L12 57L16.5 62Z" stroke="#c4c4c4" stroke-width="2.6" fill="#c4c4c4"/><path d="M12 81V87M7.5 86L12 91L16.5 86Z" stroke="#c4c4c4" stroke-width="2.6" fill="#c4c4c4"/><path d="M10 104H15L18 107V116H10Z" fill="#fff" stroke="#999"/><path d="M5.5 107.5H11L13.5 110V119.5H5.5Z" fill="#fff" stroke="#3a78b0" stroke-width="1.3"/><rect x="1.5" y="127" width="22" height="21" rx="2" fill="#d0d0d0" stroke="#a4a4a4"/><rect x="5" y="131" width="15" height="2" fill="#5a9fd4"/><path d="M5 132V143H20V132" fill="#f0f0f0" stroke="#999"/><circle cx="9" cy="141" r="2.6" fill="#6cc36c" stroke="#2a7a2a" stroke-width="0.8"/><circle cx="15" cy="141" r="2.6" fill="#6cc36c" stroke="#2a7a2a" stroke-width="0.8"/><path d="M11.5 140C12 136 15 135 16 137" stroke="#444" fill="none"/></svg>
<div class="a" style="left:780px;top:84px;width:956px;height:331px;overflow:hidden">
<div class="a" style="left:43px;top:-8px;line-height:0"><svg width="13" height="12" viewBox="0 0 13 12"><rect x="0.5" y="0.5" width="12" height="11" fill="#fff" stroke="#6f6f6f"/><path d="M4 2V5.5M7.5 2.5H9V5.5H7.5ZM3.5 6.5H5V9.5H3.5ZM8.5 6V9.5" stroke="#3d6b96" stroke-width="1" fill="none"/></svg></div>
<div class="t" style="left:61px;top:-12px;word-spacing:1px"><span style="color:#800000">context</span><span style="color:#000"> = </span><b style="color:#008000">&quot;com_fields.fields&quot;</b></div>
<div class="a" style="left:24px;top:15px;width:0;height:0;border-top:4.5px solid transparent;border-bottom:4.5px solid transparent;border-left:8px solid #a8a8a8"></div>
<div class="a" style="left:43px;top:12px;line-height:0"><svg width="14" height="15" viewBox="0 0 14 15"><path d="M1 1.5H2V4M0.5 6H2.5L0.5 9H2.5M0.5 11H2.5V14H0.5" stroke="#1f5a90" fill="none" stroke-width="1"/><rect x="5.5" y="1.5" width="8" height="3" fill="#fff" stroke="#666"/><rect x="5.5" y="6" width="8" height="3" fill="#fff" stroke="#666"/><rect x="5.5" y="10.5" width="8" height="3" fill="#fff" stroke="#666"/></svg></div>
<div class="t" style="left:61px;top:9px;word-spacing:1px"><span style="color:#800000">filter_fields</span><span style="color:#000"> = </span><span style="color:#808080">{array}</span> <span style="color:#000">[31]</span></div>
<div class="a" style="left:43px;top:33px;line-height:0"><svg width="14" height="15" viewBox="0 0 14 15"><path d="M1 1.5H2V4M0.5 6H2.5L0.5 9H2.5M0.5 11H2.5V14H0.5" stroke="#1f5a90" fill="none" stroke-width="1"/><rect x="5.5" y="1.5" width="8" height="3" fill="#fff" stroke="#666"/><rect x="5.5" y="6" width="8" height="3" fill="#fff" stroke="#666"/><rect x="5.5" y="10.5" width="8" height="3" fill="#fff" stroke="#666"/></svg></div>
<div class="t" style="left:61px;top:30px;word-spacing:1px"><span style="color:#800000">query</span><span style="color:#000"> = </span><span style="color:#808080">{array}</span> <span style="color:#000">[0]</span></div>
<div class="a" style="left:43px;top:55px;line-height:0"><svg width="13" height="12" viewBox="0 0 13 12"><rect x="0.5" y="0.5" width="12" height="11" fill="#fff" stroke="#6f6f6f"/><path d="M4 2V5.5M7.5 2.5H9V5.5H7.5ZM3.5 6.5H5V9.5H3.5ZM8.5 6V9.5" stroke="#3d6b96" stroke-width="1" fill="none"/></svg></div>
<div class="t" style="left:61px;top:51px;word-spacing:1px"><span style="color:#800000">filterFormName</span><span style="color:#000"> = </span><b style="color:#000080">null</b></div>
<div class="a" style="left:43px;top:76px;line-height:0"><svg width="13" height="12" viewBox="0 0 13 12"><rect x="0.5" y="0.5" width="12" height="11" fill="#fff" stroke="#6f6f6f"/><path d="M4 2V5.5M7.5 2.5H9V5.5H7.5ZM3.5 6.5H5V9.5H3.5ZM8.5 6V9.5" stroke="#3d6b96" stroke-width="1" fill="none"/></svg></div>
<div class="t" style="left:61px;top:72px;word-spacing:1px"><span style="color:#800000">htmlFormName</span><span style="color:#000"> = </span><b style="color:#008000">&quot;adminForm&quot;</b></div>
<div class="a" style="left:43px;top:96px;line-height:0"><svg width="14" height="15" viewBox="0 0 14 15"><path d="M1 1.5H2V4M0.5 6H2.5L0.5 9H2.5M0.5 11H2.5V14H0.5" stroke="#1f5a90" fill="none" stroke-width="1"/><rect x="5.5" y="1.5" width="8" height="3" fill="#fff" stroke="#666"/><rect x="5.5" y="6" width="8" height="3" fill="#fff" stroke="#666"/><rect x="5.5" y="10.5" width="8" height="3" fill="#fff" stroke="#666"/></svg></div>
<div class="t" style="left:61px;top:93px;word-spacing:1px"><span style="color:#800000">filterBlacklist</span><span style="color:#000"> = </span><span style="color:#808080">{array}</span> <span style="color:#000">[0]</span></div>
<div class="a" style="left:24px;top:120px;width:0;height:0;border-top:4.5px solid transparent;border-bottom:4.5px solid transparent;border-left:8px solid #a8a8a8"></div>
<div class="a" style="left:43px;top:117px;line-height:0"><svg width="14" height="15" viewBox="0 0 14 15"><path d="M1 1.5H2V4M0.5 6H2.5L0.5 9H2.5M0.5 11H2.5V14H0.5" stroke="#1f5a90" fill="none" stroke-width="1"/><rect x="5.5" y="1.5" width="8" height="3" fill="#fff" stroke="#666"/><rect x="5.5" y="6" width="8" height="3" fill="#fff" stroke="#666"/><rect x="5.5" y="10.5" width="8" height="3" fill="#fff" stroke="#666"/></svg></div>
<div class="t" style="left:61px;top:114px;word-spacing:1px"><span style="color:#800000">listBlacklist</span><span style="color:#000"> = </span><span style="color:#808080">{array}</span> <span style="color:#000">[1]</span></div>
<div class="a" style="left:43px;top:139px;line-height:0"><svg width="13" height="12" viewBox="0 0 13 12"><rect x="0.5" y="0.5" width="12" height="11" fill="#fff" stroke="#6f6f6f"/><path d="M4 2V5.5M7.5 2.5H9V5.5H7.5ZM3.5 6.5H5V9.5H3.5ZM8.5 6V9.5" stroke="#3d6b96" stroke-width="1" fill="none"/></svg></div>
<div class="t" style="left:61px;top:135px;word-spacing:1px"><span style="color:#800000">__state_set</span><span style="color:#000"> = </span><b style="color:#000080">null</b></div>
<div class="a" style="left:24px;top:162px;width:0;height:0;border-top:4.5px solid transparent;border-bottom:4.5px solid transparent;border-left:8px solid #a8a8a8"></div>
<div class="a" style="left:43px;top:160px;line-height:0"><svg width="13" height="12" viewBox="0 0 13 12"><rect x="0" y="0" width="13" height="3" fill="#c49a5a"/><rect x="0" y="4.5" width="13" height="3" fill="#c49a5a"/><rect x="0" y="9" width="13" height="3" fill="#c49a5a"/></svg></div>
<div class="t" style="left:61px;top:156px;word-spacing:1px"><span style="color:#800000">_db</span><span style="color:#000"> = </span><span style="color:#808080">{JDatabaseDriverMysql}</span> <span style="color:#000">[25]</span></div>
<div class="a" style="left:43px;top:181px;line-height:0"><svg width="13" height="12" viewBox="0 0 13 12"><rect x="0.5" y="0.5" width="12" height="11" fill="#fff" stroke="#6f6f6f"/><path d="M4 2V5.5M7.5 2.5H9V5.5H7.5ZM3.5 6.5H5V9.5H3.5ZM8.5 6V9.5" stroke="#3d6b96" stroke-width="1" fill="none"/></svg></div>
<div class="t" style="left:61px;top:177px;word-spacing:1px"><span style="color:#800000">name</span><span style="color:#000"> = </span><b style="color:#008000">&quot;fields&quot;</b></div>
<div class="a" style="left:43px;top:202px;line-height:0"><svg width="13" height="12" viewBox="0 0 13 12"><rect x="0.5" y="0.5" width="12" height="11" fill="#fff" stroke="#6f6f6f"/><path d="M4 2V5.5M7.5 2.5H9V5.5H7.5ZM3.5 6.5H5V9.5H3.5ZM8.5 6V9.5" stroke="#3d6b96" stroke-width="1" fill="none"/></svg></div>
<div class="t" style="left:61px;top:198px;word-spacing:1px"><span style="color:#800000">option</span><span style="color:#000"> = </span><b style="color:#008000">&quot;com_fields&quot;</b></div>
<div class="a" style="left:0;top:219px;width:956px;height:21px;background:#3875d7"></div>
<div class="a" style="left:23px;top:226px;width:0;height:0;border-left:4.5px solid transparent;border-right:4.5px solid transparent;border-top:8px solid #fff"></div>
<div class="a" style="left:43px;top:223px;line-height:0"><svg width="13" height="12" viewBox="0 0 13 12"><rect x="0" y="0" width="13" height="3" fill="#c49a5a"/><rect x="0" y="4.5" width="13" height="3" fill="#c49a5a"/><rect x="0" y="9" width="13" height="3" fill="#c49a5a"/></svg></div>
<div class="t" style="left:61px;top:219px;word-spacing:1px"><span style="color:#fff">state</span><span style="color:#fff"> = </span><span style="color:#fff">{JObject}</span> <span style="color:#fff">[4]</span></div>
<div class="a" style="left:63px;top:243px;line-height:0"><svg width="14" height="15" viewBox="0 0 14 15"><path d="M1 1.5H2V4M0.5 6H2.5L0.5 9H2.5M0.5 11H2.5V14H0.5" stroke="#1f5a90" fill="none" stroke-width="1"/><rect x="5.5" y="1.5" width="8" height="3" fill="#fff" stroke="#666"/><rect x="5.5" y="6" width="8" height="3" fill="#fff" stroke="#666"/><rect x="5.5" y="10.5" width="8" height="3" fill="#fff" stroke="#666"/></svg></div>
<div class="t" style="left:81px;top:240px;word-spacing:1px"><span style="color:#800000">_errors</span><span style="color:#000"> = </span><span style="color:#808080">{array}</span> <span style="color:#000">[0]</span></div>
<div class="a" style="left:63px;top:265px;line-height:0"><svg width="13" height="12" viewBox="0 0 13 12"><rect x="0.5" y="0.5" width="12" height="11" fill="#fff" stroke="#6f6f6f"/><path d="M4 2V5.5M7.5 2.5H9V5.5H7.5ZM3.5 6.5H5V9.5H3.5ZM8.5 6V9.5" stroke="#3d6b96" stroke-width="1" fill="none"/></svg></div>
<div class="t" style="left:81px;top:261px;word-spacing:1px"><span style="color:#800000">task</span><span style="color:#000"> = </span><b style="color:#000080">null</b></div>
<div class="a" style="left:63px;top:286px;line-height:0"><svg width="13" height="12" viewBox="0 0 13 12"><rect x="0.5" y="0.5" width="12" height="11" fill="#fff" stroke="#6f6f6f"/><path d="M4 2V5.5M7.5 2.5H9V5.5H7.5ZM3.5 6.5H5V9.5H3.5ZM8.5 6V9.5" stroke="#3d6b96" stroke-width="1" fill="none"/></svg></div>
<div class="t" style="left:81px;top:282px;word-spacing:1px"><span style="color:#800000">list.ordering</span><span style="color:#000"> = </span><b style="color:#008000">&quot;a.ordering&quot;</b></div>
<div class="a" style="left:63px;top:307px;line-height:0"><svg width="13" height="12" viewBox="0 0 13 12"><rect x="0.5" y="0.5" width="12" height="11" fill="#fff" stroke="#6f6f6f"/><path d="M4 2V5.5M7.5 2.5H9V5.5H7.5ZM3.5 6.5H5V9.5H3.5ZM8.5 6V9.5" stroke="#3d6b96" stroke-width="1" fill="none"/></svg></div>
<div class="t" style="left:81px;top:303px;word-spacing:1px"><span style="color:#800000">list.direction</span><span style="color:#000"> = </span><b style="color:#008000">&quot;asc&quot;</b></div>
<div class="a" style="left:43px;top:328px;line-height:0"><svg width="13" height="12" viewBox="0 0 13 12"><rect x="0.5" y="0.5" width="12" height="11" fill="#fff" stroke="#6f6f6f"/><path d="M4 2V5.5M7.5 2.5H9V5.5H7.5ZM3.5 6.5H5V9.5H3.5ZM8.5 6V9.5" stroke="#3d6b96" stroke-width="1" fill="none"/></svg></div>
<div class="t" style="left:61px;top:324px;word-spacing:1px"><span style="color:#800000">modelName</span><span style="color:#000"> = </span><b style="color:#008000">&quot;com_content.FieldsModel&quot;</b></div>
</div>
</div>
<div class="a" style="left:1697px;top:880px;width:52px;height:52px;border-radius:50%;background:#f4f4f4;box-shadow:1px 3px 5px rgba(0,0,0,0.35)"></div>
<div class="a" style="left:1700px;top:883px;width:46px;height:46px;border-radius:50%;overflow:hidden;background:linear-gradient(#2e8050 0%,#3a9a5a 30%,#46c35e 32%,#4dd064 100%)"><div class="a" style="left:12px;top:3px;width:22px;height:6px;border-radius:50%;background:rgba(255,255,255,0.35)"></div></div>
<div class="t" style="left:1704px;top:895px;font-size:14px;line-height:21px;color:#fff">68%</div>
<div class="a" style="left:1691px;top:982px;width:45px;height:23px;background:#f7f9fc;border-top:1px solid #b4c6dc"></div>
<svg class="a" style="left:1656px;top:978px" width="80" height="27" viewBox="0 0 80 27"><path d="M6 5C11 1 22 0 27 2L26 8C21 6 14 6 13 8C12 11 28 11 27 19C26 27 10 28 3 24L5 17C10 20 16 20 16 18C16 15 1 14 6 5Z" fill="#ee5022"/><path d="M12 8.5C14 7 20 6.5 24 7.5M9 20.5C13 21.5 18 21.5 21 20" stroke="#fff" stroke-width="1.2" fill="none"/><path d="M34 14H46V20H34ZM40 9V27" stroke="#2a72c8" stroke-width="2.2" fill="none"/><path d="M63 9A7 7 0 1 0 69.5 19A6 6 0 0 1 63 9Z" fill="#2a72c8"/><path d="M76.5 15L80 12V19Z" fill="#2a72c8"/></svg>
<div class="t" style="left:1566px;top:976px;font-size:15px;line-height:21px;color:#111;letter-spacing:-0.1px;-webkit-text-stroke:0.3px #111;text-shadow:0 0 1px #fff,0 0 2px #fff,1px 1px 0 #fff">安全客 ( bobao.360.cn )</div>
</body></html>
